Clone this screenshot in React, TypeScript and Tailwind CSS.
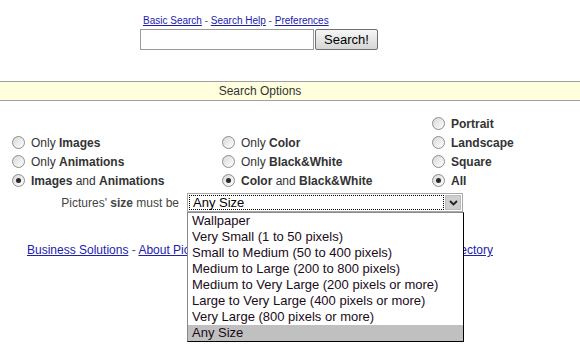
import React from 'react';

const options = [
  'Wallpaper',
  'Very Small (1 to 50 pixels)',
  'Small to Medium (50 to 400 pixels)',
  'Medium to Large (200 to 800 pixels)',
  'Medium to Very Large (200 pixels or more)',
  'Large to Very Large (400 pixels or more)',
  'Very Large (800 pixels or more)',
  'Any Size',
];

function Radio({ checked }: { checked?: boolean }) {
  return (
    <span className="relative flex items-center justify-center w-[13px] h-[13px] rounded-full border border-[#8d8d8d] bg-gradient-to-br from-[#d8d8d8] to-white shrink-0">
      {checked && <span className="w-[5px] h-[5px] rounded-full bg-[#2a2a2a]" />}
    </span>
  );
}

function Option({ checked, children }: { checked?: boolean; children: React.ReactNode }) {
  return (
    <div className="flex items-center h-[19px]">
      <Radio checked={checked} />
      <span className="ml-[6px] text-[12px] text-[#333]">{children}</span>
    </div>
  );
}

export default function App() {
  return (
    <div className="w-[580px] h-[352px] bg-white overflow-hidden font-['Liberation_Sans',Arial,sans-serif]">
      {/* liens du haut */}
      <div className="pt-[15px] pl-[143px] text-[10px] leading-[12px] text-[#555]">
        <a className="text-[#2020b0] underline">Basic Search</a> -{' '}
        <a className="text-[#2020b0] underline">Search Help</a> -{' '}
        <a className="text-[#2020b0] underline">Preferences</a>
      </div>

      {/* formulaire */}
      <div className="mt-[2px] pl-[140px] flex gap-[1px]">
        <div className="w-[174px] h-[21px] border border-[#9a9a9a] bg-white" />
        <button className="w-[63px] h-[21px] border border-[#707070] rounded-[2px] bg-gradient-to-b from-[#f6f6f6] to-[#d6d6d6] text-[13px] leading-[19px] text-black">
          Search!
        </button>
      </div>

      {/* barre jaune */}
      <div className="mt-[31px] h-[20px] border-y border-[#a0a0a0] bg-[#ffffdd]">
        <div className="w-[520px] text-center text-[12px] leading-[18px] text-[#333]">Search Options</div>
      </div>

      {/* options */}
      <div className="mt-[13px] pl-[12px] grid grid-cols-[210px_210px_1fr]">
        <div className="flex flex-col">
          <div className="h-[19px]" />
          <Option>Only <b>Images</b></Option>
          <Option>Only <b>Animations</b></Option>
          <Option checked><b>Images</b> and <b>Animations</b></Option>
        </div>
        <div className="flex flex-col">
          <div className="h-[19px]" />
          <Option>Only <b>Color</b></Option>
          <Option>Only <b>Black&amp;White</b></Option>
          <Option checked><b>Color</b> and <b>Black&amp;White</b></Option>
        </div>
        <div className="flex flex-col">
          <Option><b>Portrait</b></Option>
          <Option><b>Landscape</b></Option>
          <Option><b>Square</b></Option>
          <Option checked><b>All</b></Option>
        </div>
      </div>

      {/* taille */}
      <div className="mt-[3px] flex items-center">
        <div className="w-[179px] text-right text-[12px] text-[#444]">
          Pictures' <b>size</b> must be
        </div>
        <div className="relative ml-[8px] w-[276px] h-[19px] border border-[#a8a8a8] bg-white flex">
          <div className="flex-1 m-[1px] border border-dotted border-black flex items-center pl-[3px] text-[13px] text-black">
            Any Size
          </div>
          <div className="w-[16px] h-[15px] mt-[1px] mr-[1px] bg-[#cfcfcf] border border-[#bdbdbd] flex items-center justify-center">
            <svg width="9" height="6" viewBox="0 0 9 6">
              <path d="M1 1 L4.5 4.5 L8 1" fill="none" stroke="#222" strokeWidth="1.8" />
            </svg>
          </div>
          {/* liste déroulante */}
          <div className="absolute left-[-1px] top-[18px] w-[277px] bg-white border-l border-l-[#8a8a8a] border-r border-b border-black border-t border-t-[#8a8a8a] z-10">
            {options.map((o, i) => (
              <div
                key={i}
                className={`h-[16px] pl-[4px] text-[13px] leading-[16px] text-[#1a0a1a] ${i === options.length - 1 ? 'bg-[#c0c0c0]' : ''}`}
              >
                {o}
              </div>
            ))}
          </div>
        </div>
      </div>

      {/* pied de page, en partie caché par la liste */}
      <div className="mt-[31px] pl-[27px] flex text-[12px] leading-[14px] text-[#555]">
        <span className="w-[160px] overflow-hidden whitespace-nowrap">
          <a className="text-[#2020b0] underline">Business Solutions</a> -{' '}
          <a className="text-[#2020b0] underline">About Picsearch</a>
        </span>
        <span className="ml-[276px] w-[30px] overflow-hidden whitespace-nowrap flex justify-end">
          <a className="text-[#2020b0] underline">Image Directory</a>
        </span>
      </div>
    </div>
  );
}
